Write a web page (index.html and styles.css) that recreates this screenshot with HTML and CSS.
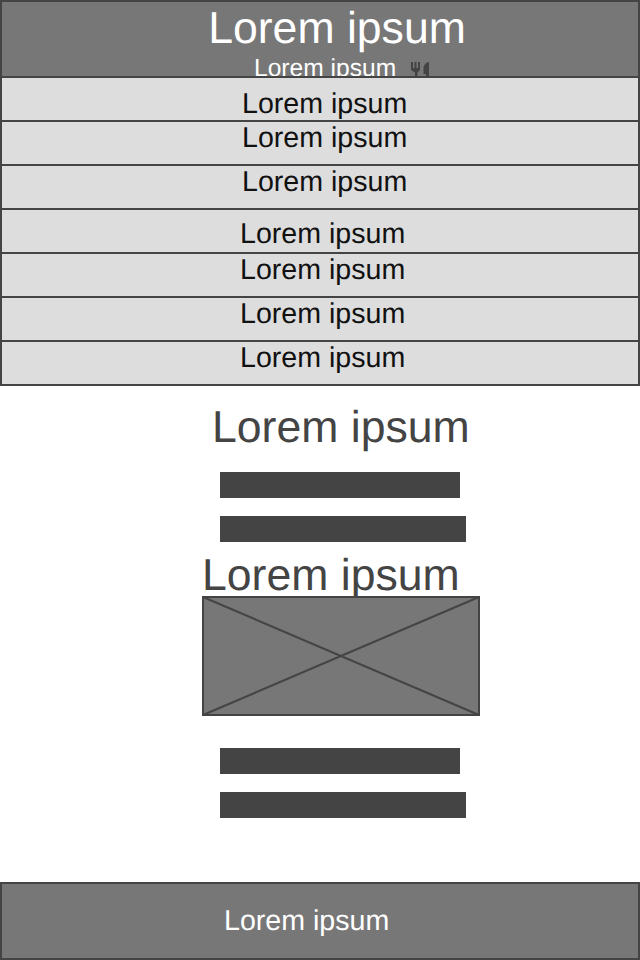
FILE: index.html
```html
<!DOCTYPE html>
<html>
<head>
    <title>Lorem ipsum</title>
    <link rel="stylesheet" href="styles.css">
</head>
<body>
    <!-- Header -->
    <header class="header">
        <div class="header-title">Lorem ipsum</div>
        <div class="header-sub">
            <span>Lorem ipsum</span>
            <svg class="header-icon" viewBox="0 0 20 20" width="20" height="20" aria-hidden="true">
                <path d="M1 1h2v6h1.500V1h2v6H8V1h2v8l-2.500 2.500V20h-2.500v-8.500L1 9z"/>
                <path d="M19 1v19h-3v-7h-2.500V7.500C13.500 4 16 1.500 19 1z"/>
            </svg>
        </div>
    </header>

    <!-- Menu rows -->
    <nav class="menu">
        <div class="menu-row menu-row-a pad-top-lg">Lorem ipsum</div>
        <div class="menu-row menu-row-a">Lorem ipsum</div>
        <div class="menu-row menu-row-a">Lorem ipsum</div>
        <div class="menu-row menu-row-b pad-top-md">Lorem ipsum</div>
        <div class="menu-row menu-row-b">Lorem ipsum</div>
        <div class="menu-row menu-row-b">Lorem ipsum</div>
        <div class="menu-row menu-row-b">Lorem ipsum</div>
    </nav>

    <!-- Content -->
    <main class="content">
        <h2 class="heading heading-first">Lorem ipsum</h2>
        <div class="bar bar-short bar-gap-lg"></div>
        <div class="bar bar-long"></div>
        <h2 class="heading heading-second">Lorem ipsum</h2>
        <svg class="placeholder" viewBox="0 0 278 120" preserveAspectRatio="none" aria-hidden="true">
            <rect x="1" y="1" width="276" height="118" fill="#777" stroke="#444" stroke-width="2"/>
            <path d="M1 1L277 119M277 1L1 119" fill="none" stroke="#444" stroke-width="2"/>
        </svg>
        <div class="bar bar-short bar-gap-xl"></div>
        <div class="bar bar-long"></div>
    </main>

    <footer class="footer">Lorem ipsum</footer>
</body>
</html>
```

FILE: styles.css
```css
* {
    box-sizing: border-box;
}
html,
body {
    height: 100%;
}
body {
    margin: 0;
    display: flex;
    flex-direction: column;
    min-height: 960px;
    font-family: "Liberation Sans", Arial, sans-serif;
    text-rendering: geometricPrecision;
    background-color: #fff;
    overflow: hidden;
}
.header {
    height: 78px;
    flex: none;
    background-color: #777;
    border: 2px solid #444;
    color: #fff;
    overflow: hidden;
}
.header-title {
    font-size: 44.6px;
    line-height: 54px;
    text-align: center;
    padding-left: 34px;
}
.header-sub {
    display: flex;
    align-items: flex-start;
    font-size: 24.6px;
    line-height: 28px;
    margin-top: -1px;
    padding-left: 252px;
}
.header-icon {
    flex: none;
    margin: 6px 0 0 14px;
    fill: #444;
}
.menu {
    flex: none;
}
.menu-row {
    height: 46px;
    margin-top: -2px;
    padding-top: 1px;
    background-color: #ddd;
    border: 2px solid #444;
    color: #111;
    font-size: 28.6px;
    line-height: 30px;
}
.menu-row-a {
    padding-left: 240px;
}
.menu-row-b {
    padding-left: 238px;
}
.pad-top-lg {
    padding-top: 11px;
}
.pad-top-md {
    padding-top: 9px;
}
.content {
    flex: 1;
    display: flex;
    flex-direction: column;
    align-items: flex-start;
}
.heading {
    margin: 0;
    font-size: 44.6px;
    font-weight: normal;
    line-height: 46px;
    color: #444;
}
.heading-first {
    margin: 19px 0 -1px 212px;
}
.heading-second {
    margin: 11px 0 -3px 202px;
}
.placeholder {
    display: block;
    width: 278px;
    height: 120px;
    margin-left: 202px;
}
.bar {
    height: 26px;
    margin-left: 220px;
    margin-top: 18px;
    background-color: #444;
}
.bar-short {
    width: 240px;
}
.bar-long {
    width: 246px;
}
.bar-gap-lg {
    margin-top: 22px;
}
.bar-gap-xl {
    margin-top: 32px;
}
.footer {
    height: 78px;
    flex: none;
    background-color: #777;
    border: 2px solid #444;
    color: #fff;
    font-size: 28.6px;
    line-height: 74px;
    padding-left: 222px;
}
```
